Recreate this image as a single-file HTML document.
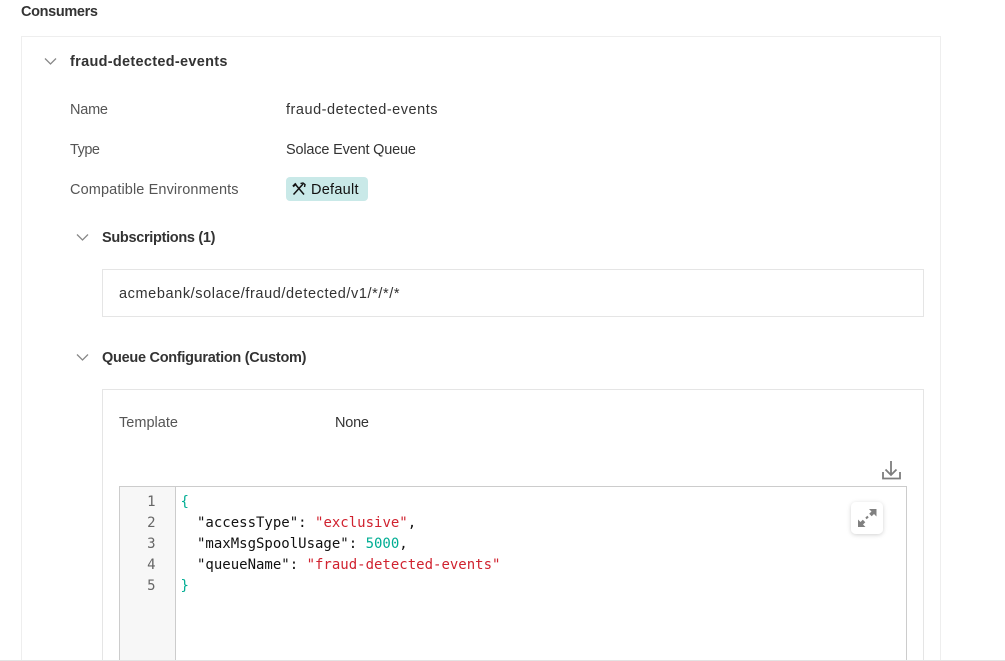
<!DOCTYPE html>
<html><head><meta charset="utf-8"><style>
html,body{margin:0;padding:0;background:#fff;width:1005px;height:661px;overflow:hidden}
svg{display:block}
text{font-family:"Liberation Sans",sans-serif;font-size:14.5px;fill:#333;white-space:pre}
.l{fill:#555}
.b{font-weight:bold;fill:#333;font-size:14.5px}
.m{font-family:"DejaVu Sans Mono","Liberation Mono",monospace;font-size:14px;fill:#111}
.n{fill:#666;text-anchor:end}
.g{fill:#00ad93}
.r{fill:#d0222f}
</style></head><body>
<svg width="1005" height="661" viewBox="0 0 1005 661" xmlns="http://www.w3.org/2000/svg">
<defs><filter id="s" x="-30%" y="-30%" width="160%" height="160%"><feDropShadow dx="0" dy="1" stdDeviation="2" flood-color="#000" flood-opacity=".18"/></filter></defs>
<rect x="21.5" y="36.5" width="919" height="640" fill="#fff" stroke="#eeeeee"/>
<text class="b" x="21" y="16" textLength="77" lengthAdjust="spacing">Consumers</text>
<path d="M45 58.500l5.500 5.500 5.500-5.500" fill="none" stroke="#888" stroke-width="1.300"/>
<text class="b" x="70" y="66" textLength="157.500" lengthAdjust="spacing">fraud-detected-events</text>
<text class="l" x="70" y="114" textLength="38" lengthAdjust="spacing">Name</text>
<text x="286" y="114" textLength="151.500" lengthAdjust="spacing">fraud-detected-events</text>
<text class="l" x="70" y="154" textLength="30" lengthAdjust="spacing">Type</text>
<text x="286" y="154" textLength="130" lengthAdjust="spacing">Solace Event Queue</text>
<text class="l" x="70" y="194" textLength="168.500" lengthAdjust="spacing">Compatible Environments</text>
<rect x="286" y="177" width="82" height="24" rx="4" fill="#c9e9e8"/>
<g fill="none" stroke="#111"><path d="M293.500 194.500l9.500-10.500M295.500 184.500l8.500 10" stroke-width="1.500"/><path d="M293 186.500l3-3" stroke-width="2"/><path d="M300.500 183.500l2.500-.5 2 1.500-.5 2.500" stroke-width="1.400"/></g>
<text x="311" y="194" textLength="47.500" lengthAdjust="spacing" style="fill:#111">Default</text>
<path d="M77 234.500l5.500 5.500 5.500-5.500" fill="none" stroke="#888" stroke-width="1.300"/>
<text class="b" x="102" y="242" textLength="113.500" lengthAdjust="spacing">Subscriptions (1)</text>
<rect x="102.500" y="269.500" width="821" height="47" fill="#fff" stroke="#e5e5e5"/>
<text x="119" y="298" textLength="280.500" lengthAdjust="spacing">acmebank/solace/fraud/detected/v1/*/*/*</text>
<path d="M77 354.500l5.500 5.500 5.500-5.500" fill="none" stroke="#888" stroke-width="1.300"/>
<text class="b" x="102" y="362" textLength="204.500" lengthAdjust="spacing">Queue Configuration (Custom)</text>
<rect x="102.500" y="389.500" width="821" height="300" fill="#fff" stroke="#e5e5e5"/>
<text class="l" x="119" y="427" textLength="59" lengthAdjust="spacing">Template</text>
<text x="335" y="427" textLength="34" lengthAdjust="spacing">None</text>
<g fill="none" stroke="#7d7d7d" stroke-width="1.800"><path d="M891 461v13.500M885.500 469.500l5.500 5.500 5.500-5.500"/><path d="M883 472v6.500h17v-6.500"/></g>
<rect x="119.500" y="486.500" width="787" height="200" fill="#fff" stroke="#cccccc"/>
<rect x="120" y="487" width="55" height="199" fill="#f7f7f7"/>
<path d="M175.500 487v199" stroke="#cccccc"/>
<text class="m n" x="155.500" y="506">1</text>
<text class="m n" x="155.500" y="527">2</text>
<text class="m n" x="155.500" y="548">3</text>
<text class="m n" x="155.500" y="569">4</text>
<text class="m n" x="155.500" y="590">5</text>
<text class="m g" x="180.500" y="506">{</text>
<text class="m" x="197" y="527">"accessType": <tspan class="r">"exclusive"</tspan>,</text>
<text class="m" x="197" y="548">"maxMsgSpoolUsage": <tspan class="g">5000</tspan>,</text>
<text class="m" x="197" y="569">"queueName": <tspan class="r">"fraud-detected-events"</tspan></text>
<text class="m g" x="180.500" y="590">}</text>
<rect x="851" y="502" width="32" height="32" rx="5" fill="#fff" filter="url(#s)"/>
<g fill="#808080"><path d="M869 509h7.500v7.500l-2.500-2.500-2.300 2.300-2.500-2.500 2.300-2.300z"/><path d="M865.500 527h-7.500v-7.500l2.500 2.500 2.300-2.300 2.500 2.500-2.300 2.300z"/></g>
<path d="M866 518.500l2-2" stroke="#808080" stroke-width="2"/>
<rect x="0" y="660" width="1005" height="1" fill="#e3e3e3"/>
</svg>
</body></html>
